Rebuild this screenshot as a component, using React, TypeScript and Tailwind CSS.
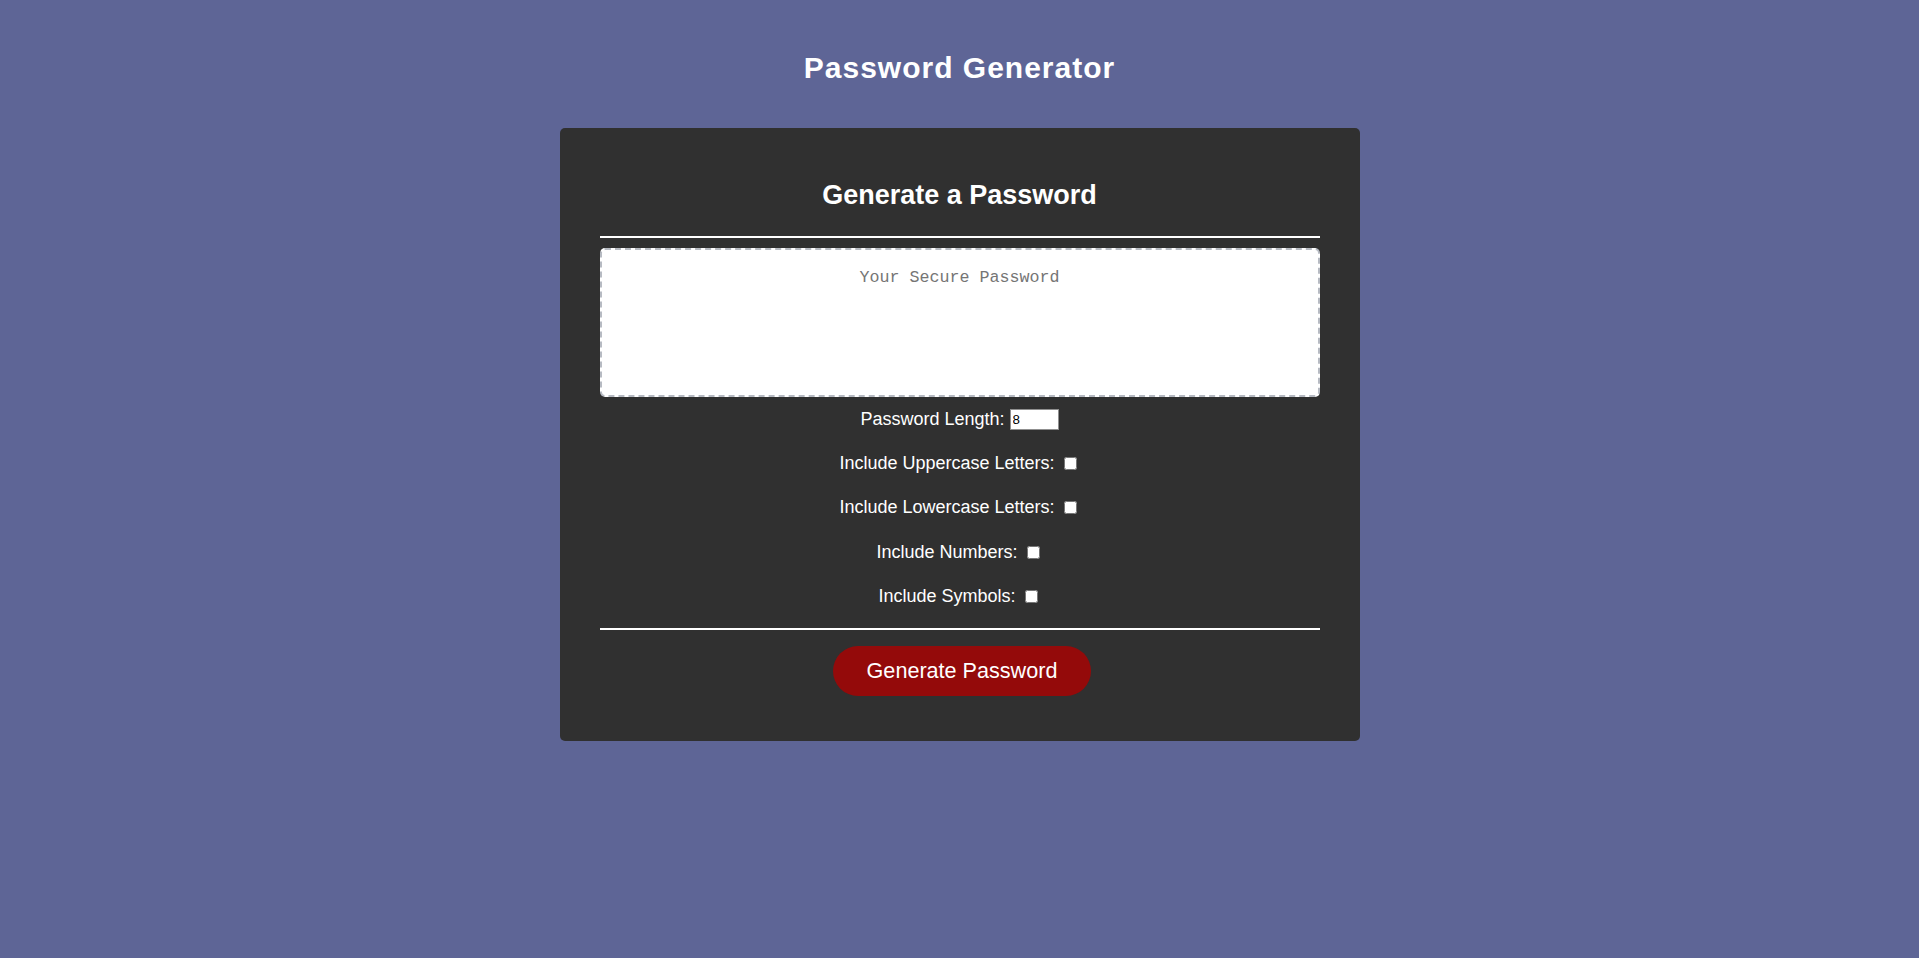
import { useState } from "react";

// ================= OPTIONS =================
const OPTIONS = [
  { id: "upper", label: "Include Uppercase Letters:" },
  { id: "lower", label: "Include Lowercase Letters:" },
  { id: "numbers", label: "Include Numbers:" },
  { id: "symbols", label: "Include Symbols:" },
];

export default function App() {
  const [length, setLength] = useState("8");
  const [password] = useState("");

  return (
    <div className="min-h-screen bg-[#5e6596] pt-[50px] font-['Liberation_Sans',Arial,sans-serif] text-white">
      <h1 className="text-center text-[30px] leading-[35px] font-bold tracking-[1px]">
        Password Generator
      </h1>

      <div className="mx-auto mt-[43px] w-[800px] rounded-[5px] bg-[#303030] px-[40px] pt-[52px] pb-[45px]">
        <h2 className="text-center text-[27px] leading-[31px] font-bold">
          Generate a Password
        </h2>

        <div className="mt-[25px] h-[2px] bg-white" />

        {/* OUTPUT */}
        <textarea
          readOnly
          value={password}
          placeholder="Your Secure Password"
          className="mt-[10px] block h-[149px] w-full resize-none rounded-[5px] border-2 border-dashed border-[#b6bac2] bg-white pt-[15px] text-center font-['Liberation_Mono',monospace] text-[16.67px] text-black outline-none placeholder:text-[#757575]"
        />

        {/* LENGTH */}
        <div className="flex h-[44.3px] items-center justify-center text-[18px]">
          <label htmlFor="length">Password Length:</label>
          <input
            id="length"
            type="text"
            value={length}
            onChange={(e) => setLength(e.target.value)}
            className="ml-[5px] h-[21px] w-[49px] border border-[#8f8f8f] bg-white px-[2px] font-['Liberation_Sans',Arial,sans-serif] text-[13.33px] text-black outline-none"
          />
        </div>

        {/* CHECKBOXES */}
        {OPTIONS.map((opt) => (
          <div
            key={opt.id}
            className="flex h-[44.3px] items-center justify-center text-[18px]"
          >
            <label htmlFor={opt.id}>{opt.label}</label>
            <input
              id={opt.id}
              type="checkbox"
              className="mr-[3px] ml-[9px] h-[13px] w-[13px]"
            />
          </div>
        ))}

        <div className="mt-[10px] h-[2px] bg-white" />

        <div className="mt-[16px] flex justify-center">
          <button className="ml-[5px] h-[50px] w-[258px] rounded-full bg-[#940a0a] text-[21.6px] text-white">
            Generate Password
          </button>
        </div>
      </div>
    </div>
  );
}
